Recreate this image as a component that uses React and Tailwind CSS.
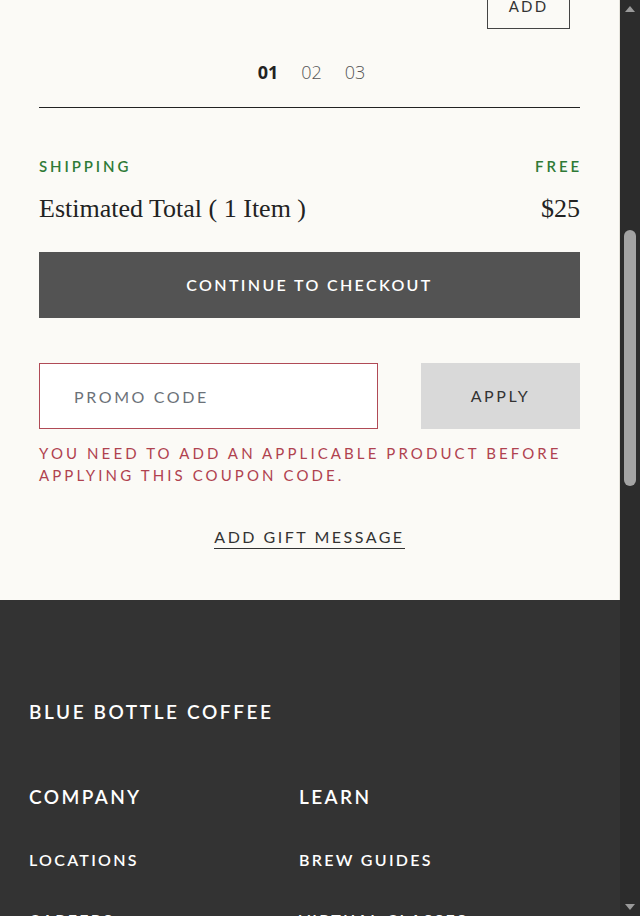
import React from "react";

const sans = { fontFamily: "Lato, 'Noto Sans', sans-serif" };

const App = () => {
  return (
    <div className="flex h-[916px] w-[640px] overflow-hidden bg-[#333333]">
      {/* PAGE */}
      <div className="w-[620px] shrink-0 flex flex-col" style={sans}>
        {/* CART SUMMARY */}
        <div className="bg-[#fbfaf6] px-[39px] pb-[51px] border-r border-[#e6e4dd]">
          <div className="flex justify-end pr-[10px]">
            <button className="-mt-[17px] h-[46px] w-[83px] border border-[#444] flex items-center justify-center text-[15px] tracking-[2.2px] text-[#333]">
              ADD
            </button>
          </div>

          {/* PAGER */}
          <div
            className="flex justify-center items-center gap-[23px] mt-[30px] h-[26px] text-[18px] pl-[4px]"
            style={{ fontFamily: "'Open Sans', sans-serif" }}
          >
            <span className="font-bold text-[#222]">01</span>
            <span className="font-light text-[#555]">02</span>
            <span className="font-light text-[#555]">03</span>
          </div>

          <div className="mt-[22px] border-t border-[#222]"></div>

          {/* TOTALS */}
          <div className="flex justify-between items-center mt-[48px] h-[20px] text-[15px] tracking-[2.9px] text-[#2f7a36] font-semibold">
            <span>SHIPPING</span>
            <span className="-mr-[2px]">FREE</span>
          </div>
          <div
            className="flex justify-between items-center mt-[10px] h-[44px] text-[26px] text-[#222]"
            style={{ fontFamily: "'Liberation Serif', serif" }}
          >
            <span>Estimated Total ( 1 Item )</span>
            <span>$25</span>
          </div>

          <button className="mt-[22px] w-full h-[66px] bg-[#535353] text-white text-[16px] font-semibold tracking-[2.35px]">
            CONTINUE TO CHECKOUT
          </button>

          {/* PROMO */}
          <div className="flex justify-between mt-[45px]">
            <input
              type="text"
              placeholder="PROMO CODE"
              className="w-[339px] h-[66px] border border-[#b04a56] bg-white px-[34px] text-[16px] tracking-[2.6px] outline-none placeholder:text-[#6b7178]"
              style={sans}
            />
            <button className="w-[159px] h-[66px] bg-[#d9d9d9] text-[#333] text-[16px] tracking-[2.6px]">
              APPLY
            </button>
          </div>
          <p className="mt-[13px] text-[15px] leading-[22px] tracking-[3.1px] text-[#b0424f]">
            YOU NEED TO ADD AN APPLICABLE PRODUCT BEFORE APPLYING THIS COUPON CODE.
          </p>

          <div className="flex justify-center mt-[41px]">
            <a className="text-[16px] tracking-[2.5px] text-[#333] border-b border-[#333] leading-[20px] pb-[1px]">
              ADD GIFT MESSAGE
            </a>
          </div>
        </div>

        {/* FOOTER */}
        <div className="bg-[#333333] px-[29px] pt-[99px] text-white">
          <h2 className="text-[19px] font-semibold tracking-[2.6px] leading-[26px]">
            BLUE BOTTLE COFFEE
          </h2>
          <div className="grid grid-cols-2 mt-[59px] w-[540px]">
            <div>
              <h3 className="text-[19px] font-semibold tracking-[2.4px] leading-[26px]">COMPANY</h3>
              <ul className="mt-[39px] flex flex-col gap-[38px] text-[16px] font-semibold tracking-[2.3px] leading-[22px]">
                <li>LOCATIONS</li>
                <li>CAREERS</li>
              </ul>
            </div>
            <div>
              <h3 className="text-[19px] font-semibold tracking-[2.4px] leading-[26px]">LEARN</h3>
              <ul className="mt-[39px] flex flex-col gap-[38px] text-[16px] font-semibold tracking-[2.3px] leading-[22px]">
                <li>BREW GUIDES</li>
                <li>VIRTUAL CLASSES</li>
              </ul>
            </div>
          </div>
        </div>
      </div>

      {/* SCROLLBAR */}
      <div className="w-[20px] shrink-0 h-full bg-[#2c2c2c] flex flex-col items-center">
        <svg width="12" height="8" viewBox="0 0 12 8" className="mt-[5px]">
          <path d="M6 1 L11 7 L1 7 Z" fill="#9a9a9a" />
        </svg>
        <div className="mt-[217px] w-[12px] h-[256px] rounded-full bg-[#a3a3a3]"></div>
        <div className="flex-1"></div>
        <svg width="12" height="8" viewBox="0 0 12 8" className="mb-[5px]">
          <path d="M1 1 L11 1 L6 7 Z" fill="#9a9a9a" />
        </svg>
      </div>
    </div>
  );
};

export default App;
